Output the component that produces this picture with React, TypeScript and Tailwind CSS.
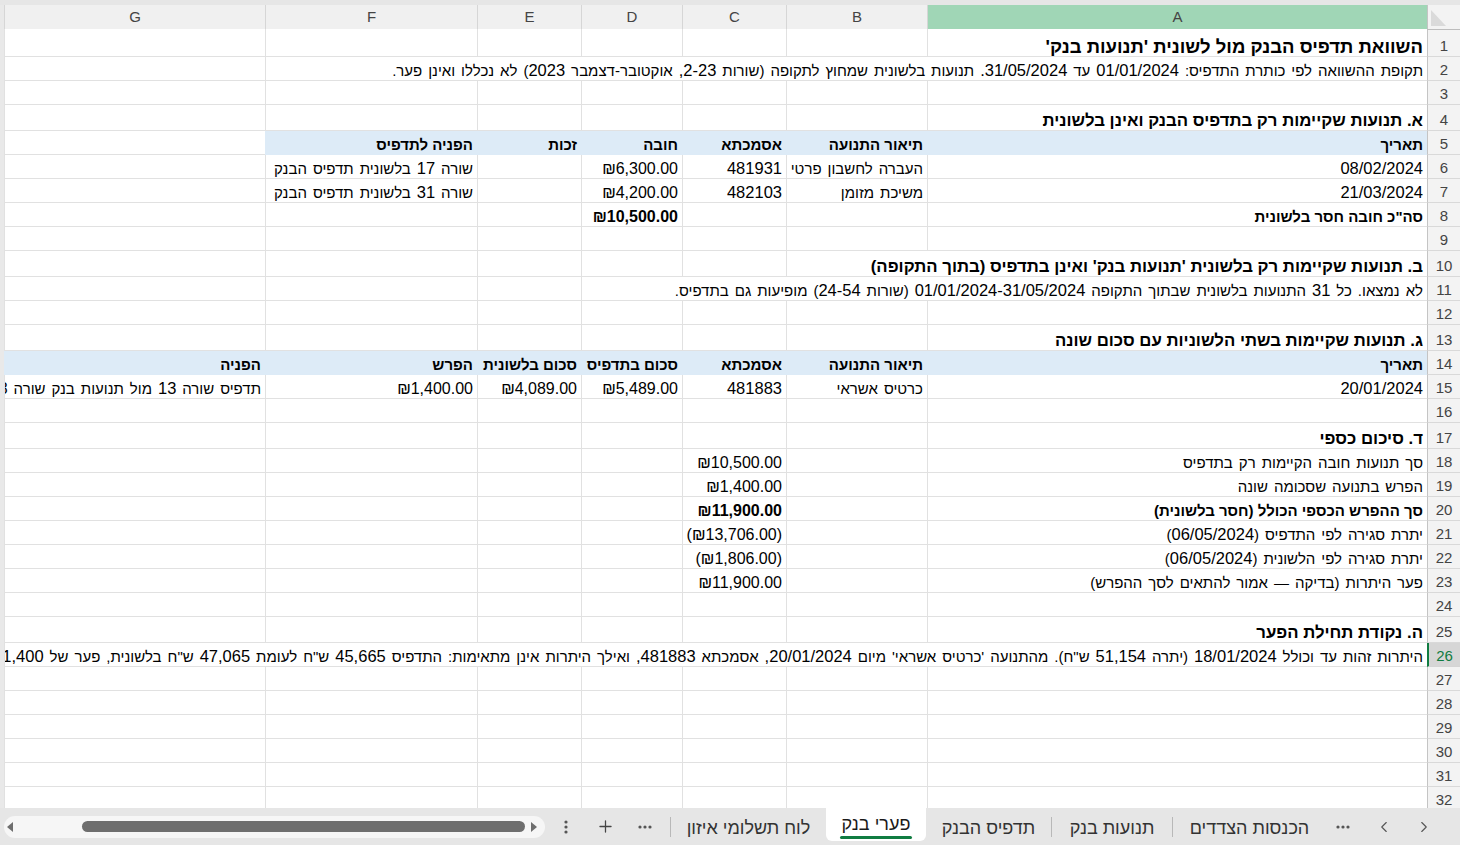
import { ChevronLeft, ChevronRight, Plus } from "lucide-react";
import type { ReactNode } from "react";

const GRID =
  "grid grid-cols-[33px_500px_141px_104px_101px_104px_212px_261px_4px]";

const SPAN: Record<number, string> = {
  1: "",
  2: "col-span-2",
  3: "col-span-3",
  4: "col-span-4",
  5: "col-span-5",
  6: "col-span-6",
  7: "col-span-7",
};

type Cell = {
  text?: string;
  span?: number;
  bold?: boolean;
  num?: boolean;
  size?: string;
};

type RowDef = {
  n: number;
  h?: string;
  cells?: Cell[];
  fill?: number;
  selected?: boolean;
};

const heading = "text-[16.8px] font-bold";

const rows: RowDef[] = [
  {
    n: 1,
    h: "h-[28px]",
    cells: [
      {
        text: "השוואת תדפיס הבנק מול לשונית 'תנועות בנק'",
        size: "text-[18.5px] font-bold",
      },
    ],
  },
  {
    n: 2,
    cells: [
      {
        span: 6,
        text: "תקופת ההשוואה לפי כותרת התדפיס: 01/01/2024 עד 31/05/2024. תנועות בלשונית שמחוץ לתקופה (שורות 2-23, אוקטובר-דצמבר 2023) לא נכללו ואינן פער.",
      },
    ],
  },
  { n: 3 },
  {
    n: 4,
    h: "h-[26px]",
    cells: [
      { text: "א. תנועות שקיימות רק בתדפיס הבנק ואינן בלשונית", size: heading },
    ],
  },
  {
    n: 5,
    fill: 6,
    cells: [
      { text: "תאריך", bold: true },
      { text: "תיאור התנועה", bold: true },
      { text: "אסמכתא", bold: true },
      { text: "חובה", bold: true },
      { text: "זכות", bold: true },
      { text: "הפניה לתדפיס", bold: true },
    ],
  },
  {
    n: 6,
    cells: [
      { text: "08/02/2024" },
      { text: "העברה לחשבון פרטי" },
      { text: "481931" },
      { text: "₪6,300.00", num: true },
      {},
      { text: "שורה 17 בלשונית תדפיס הבנק" },
    ],
  },
  {
    n: 7,
    cells: [
      { text: "21/03/2024" },
      { text: "משיכת מזומן" },
      { text: "482103" },
      { text: "₪4,200.00", num: true },
      {},
      { text: "שורה 31 בלשונית תדפיס הבנק" },
    ],
  },
  {
    n: 8,
    cells: [
      { text: 'סה"כ חובה חסר בלשונית', bold: true },
      {},
      {},
      { text: "₪10,500.00", num: true, bold: true },
    ],
  },
  { n: 9 },
  {
    n: 10,
    h: "h-[26px]",
    cells: [
      {
        span: 2,
        text: "ב. תנועות שקיימות רק בלשונית 'תנועות בנק' ואינן בתדפיס (בתוך התקופה)",
        size: heading,
      },
    ],
  },
  {
    n: 11,
    cells: [
      {
        span: 4,
        text: "לא נמצאו. כל 31 התנועות בלשונית שבתוך התקופה 01/01/2024-31/05/2024 (שורות 24-54) מופיעות גם בתדפיס.",
      },
    ],
  },
  { n: 12 },
  {
    n: 13,
    h: "h-[26px]",
    cells: [
      { text: "ג. תנועות שקיימות בשתי הלשוניות עם סכום שונה", size: heading },
    ],
  },
  {
    n: 14,
    fill: 7,
    cells: [
      { text: "תאריך", bold: true },
      { text: "תיאור התנועה", bold: true },
      { text: "אסמכתא", bold: true },
      { text: "סכום בתדפיס", bold: true },
      { text: "סכום בלשונית", bold: true },
      { text: "הפרש", bold: true },
      { text: "הפניה", bold: true },
    ],
  },
  {
    n: 15,
    cells: [
      { text: "20/01/2024" },
      { text: "כרטיס אשראי" },
      { text: "481883" },
      { text: "₪5,489.00", num: true },
      { text: "₪4,089.00", num: true },
      { text: "₪1,400.00", num: true },
      { text: "תדפיס שורה 13 מול תנועות בנק שורה 8" },
    ],
  },
  { n: 16 },
  {
    n: 17,
    h: "h-[26px]",
    cells: [{ text: "ד. סיכום כספי", size: heading }],
  },
  {
    n: 18,
    cells: [
      { text: "סך תנועות חובה הקיימות רק בתדפיס" },
      {},
      { text: "₪10,500.00", num: true },
    ],
  },
  {
    n: 19,
    cells: [
      { text: "הפרש בתנועה שסכומה שונה" },
      {},
      { text: "₪1,400.00", num: true },
    ],
  },
  {
    n: 20,
    cells: [
      { text: "סך ההפרש הכספי הכולל (חסר בלשונית)", bold: true },
      {},
      { text: "₪11,900.00", num: true, bold: true },
    ],
  },
  {
    n: 21,
    cells: [
      { text: "יתרת סגירה לפי התדפיס (06/05/2024)" },
      {},
      { text: "(₪13,706.00)", num: true },
    ],
  },
  {
    n: 22,
    cells: [
      { text: "יתרת סגירה לפי הלשונית (06/05/2024)" },
      {},
      { text: "(₪1,806.00)", num: true },
    ],
  },
  {
    n: 23,
    cells: [
      { text: "פער היתרות (בדיקה — אמור להתאים לסך ההפרש)" },
      {},
      { text: "₪11,900.00", num: true },
    ],
  },
  { n: 24 },
  {
    n: 25,
    h: "h-[26px]",
    cells: [{ text: "ה. נקודת תחילת הפער", size: heading }],
  },
  {
    n: 26,
    selected: true,
    cells: [
      {
        span: 7,
        text: 'היתרות זהות עד וכולל 18/01/2024 (יתרה 51,154 ש"ח). מהתנועה \'כרטיס אשראי\' מיום 20/01/2024, אסמכתא 481883, ואילך היתרות אינן מתאימות: התדפיס 45,665 ש"ח לעומת 47,065 ש"ח בלשונית, פער של 1,400 ש"ח.',
      },
    ],
  },
  { n: 27 },
  { n: 28 },
  { n: 29 },
  { n: 30 },
  { n: 31 },
  { n: 32 },
];

// digits in the sheet render a bit larger than the Hebrew letters
function mix(t?: string, bold?: boolean) {
  if (!t) return null;
  return (
    <span className={bold ? "" : "[word-spacing:1.8px]"}>
      {t.split(/([0-9₪][0-9,./₪-]*)/).map((p, i) =>
        i % 2 ? (
          <span key={i} className="text-[16.5px]">
            {p}
          </span>
        ) : (
          p
        ),
      )}
    </span>
  );
}

function SheetRow({ row }: { row: RowDef }) {
  const cells = row.cells ?? [];
  const fill = row.fill ?? 0;
  const out: ReactNode[] = [];
  let col = 0;

  const box = (key: string, c: Cell, filled: boolean) => (
    <div
      key={key}
      className={`${SPAN[c.span ?? 1]} flex items-end overflow-hidden whitespace-nowrap border-b border-l pl-[2px] pr-[4px] leading-[18px] ${
        filled ? "border-[#ddebf7] bg-[#ddebf7]" : "border-[#e1e1e1] bg-white"
      } ${c.size ?? "text-[15px]"} ${c.bold ? "font-bold" : ""}`}
    >
      {c.num ? (
        <span dir="ltr" className="text-[16px]">
          {c.text}
        </span>
      ) : c.size ? (
        <span>{c.text}</span>
      ) : (
        mix(c.text, c.bold)
      )}
    </div>
  );

  cells.forEach((c, i) => {
    out.push(box(`c${i}`, c, col < fill));
    col += c.span ?? 1;
  });
  while (col < 7) {
    out.push(box(`e${col}`, {}, col < fill));
    col++;
  }

  return (
    <div className={`${GRID} ${row.h ?? "h-[24px]"} shrink-0`}>
      {row.selected ? (
        <div className="flex items-end justify-center border-b border-l-2 border-b-[#d4d4d4] border-l-[#107c41] bg-[#d6d6d6] pb-[1px] text-[15px] leading-[18px] text-[#107c41]">
          {row.n}
        </div>
      ) : (
        <div className="flex items-end justify-center border-b border-l border-b-[#d9d9d9] border-l-[#c4c4c4] bg-[#f3f3f3] pb-[1px] text-[15px] leading-[18px] text-[#444]">
          {row.n}
        </div>
      )}
      {out}
      <div className="bg-[#e9e9e9]" />
    </div>
  );
}

function ColumnHeader() {
  const letters = ["A", "B", "C", "D", "E", "F", "G"];
  return (
    <div className={`${GRID} h-[24px] shrink-0`}>
      <div className="relative border-b border-l border-b-[#bdbdbd] border-l-[#c4c4c4] bg-[#f3f3f3]">
        <svg
          className="absolute bottom-[3px] right-[14px]"
          width="15"
          height="16"
          viewBox="0 0 15 16"
        >
          <polygon points="0,0 0,16 15,16" fill="#dadada" />
        </svg>
      </div>
      {letters.map((l) => (
        <div
          key={l}
          className={`flex items-center justify-center border-b border-l border-b-[#bdbdbd] border-l-[#d6d6d6] pt-[1px] text-[15px] text-[#444] ${
            l === "A" ? "bg-[#a0d6b6]" : "bg-[#f0f0f0]"
          }`}
        >
          {l}
        </div>
      ))}
      <div className="bg-[#e9e9e9]" />
    </div>
  );
}

function Dots({ vertical = false }: { vertical?: boolean }) {
  return (
    <svg
      width={vertical ? 4 : 14}
      height={vertical ? 14 : 4}
      viewBox={vertical ? "0 0 4 14" : "0 0 14 4"}
    >
      {[0, 1, 2].map((i) =>
        vertical ? (
          <circle key={i} cx="2" cy={2 + i * 5} r="1.6" fill="#555" />
        ) : (
          <circle key={i} cx={2 + i * 5} cy="2" r="1.6" fill="#555" />
        ),
      )}
    </svg>
  );
}

function Sep() {
  return <div className="h-[20px] w-px shrink-0 bg-[#b8b8b8]" />;
}

function Tab({ label, w }: { label: string; w: string }) {
  return (
    <div
      dir="rtl"
      className={`${w} flex h-full shrink-0 items-center justify-center pt-[3px] text-[18px] text-[#333]`}
    >
      {label}
    </div>
  );
}

function TabBar() {
  return (
    <div
      dir="ltr"
      className="flex h-[37px] shrink-0 items-center bg-[#e6e6e6] pl-[4px]"
    >
      {/* horizontal scroll */}
      <div className="flex h-[22px] w-[541px] shrink-0 items-center rounded-full bg-[#f6f6f6] pl-[3px]">
        <svg width="6" height="10" viewBox="0 0 6 10">
          <polygon points="6,0 6,10 0,5" fill="#6e6e6e" />
        </svg>
        <div className="ml-[69px] h-[11px] w-[443px] rounded-full bg-[#6e6e6e]" />
        <svg className="ml-[6px]" width="6" height="10" viewBox="0 0 6 10">
          <polygon points="0,0 0,10 6,5" fill="#6e6e6e" />
        </svg>
      </div>
      <div className="ml-[11px] flex w-[20px] shrink-0 justify-center">
        <Dots vertical />
      </div>
      <div className="ml-[17px] flex w-[24px] shrink-0 justify-center">
        <Plus className="h-[19px] w-[19px] text-[#444]" strokeWidth={1.6} />
      </div>
      <div className="ml-[16px] flex w-[24px] shrink-0 justify-center">
        <Dots />
      </div>
      <div className="ml-[13px]">
        <Sep />
      </div>
      <Tab label="לוח תשלומי איזון" w="w-[155px]" />
      <div className="flex h-full w-[100px] shrink-0 flex-col items-center self-start">
        <div className="flex h-[33px] w-full flex-col items-center justify-end rounded-b-[6px] bg-white pb-[2px]">
          <span dir="rtl" className="text-[18px] leading-[20px] text-[#1a1a1a]">
            פערי בנק
          </span>
          <div className="mt-[2px] h-[3px] w-[72px] rounded-full bg-[#107c41]" />
        </div>
      </div>
      <Tab label="תדפיס הבנק" w="w-[125px]" />
      <Sep />
      <Tab label="תנועות בנק" w="w-[120px]" />
      <Sep />
      <Tab label="הכנסות הצדדים" w="w-[153px]" />
      <div className="ml-[5px] flex w-[24px] shrink-0 justify-center">
        <Dots />
      </div>
      <div className="ml-[17px] flex w-[24px] shrink-0 justify-center">
        <ChevronLeft className="h-[18px] w-[18px] text-[#555]" strokeWidth={1.5} />
      </div>
      <div className="ml-[16px] flex w-[24px] shrink-0 justify-center">
        <ChevronRight className="h-[18px] w-[18px] text-[#555]" strokeWidth={1.5} />
      </div>
    </div>
  );
}

export default function App() {
  return (
    <div className="flex h-[845px] w-[1460px] flex-col overflow-hidden bg-white font-['Liberation_Sans',Arial,sans-serif] text-black">
      <div className="h-[5px] shrink-0 bg-[#e6e6e6]" />
      <div dir="rtl" className="flex min-h-0 flex-1 flex-col overflow-hidden">
        <ColumnHeader />
        {rows.map((r) => (
          <SheetRow key={r.n} row={r} />
        ))}
      </div>
      <TabBar />
    </div>
  );
}
